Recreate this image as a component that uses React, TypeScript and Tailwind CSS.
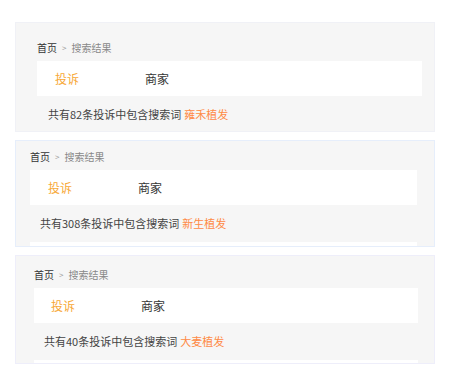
import React from "react";

type CardProps = {
  count: string;
  keyword: string;
  cardClass: string;
  padClass: string;
  countPad: string;
  tabPad: string;
};

function Card({ count, keyword, cardClass, padClass, countPad, tabPad }: CardProps) {
  return (
    <div className={`w-[420px] overflow-hidden border bg-[#f6f6f6] ${cardClass}`}>
      <div className={padClass}>
        <div className="flex h-[14px] items-center text-[10px] leading-[14px]">
          <span className="text-[#333]">首页</span>
          <span className="mx-[5px] text-[8px] text-[#999]">&gt;</span>
          <span className="text-[#888]">搜索结果</span>
        </div>
        <div className={`mt-[6px] flex h-[35px] items-center bg-white text-[12px] ${tabPad}`}>
          <span className="w-[90px] text-[#f7a836]">投诉</span>
          <span className="text-[#333]">商家</span>
        </div>
        <div className={`flex h-[37px] items-center text-[11px] text-[#444] ${countPad}`}>
          <span>共有{count}条投诉中包含搜索词</span>
          <span className="ml-[3px] text-[#ff8a45]">{keyword}</span>
        </div>
        <div className="h-[35px] bg-white" />
      </div>
    </div>
  );
}

export default function App() {
  return (
    <div
      className="h-[387px] w-[450px] bg-white px-[15px] pt-[22px]"
      style={{ fontFamily: '"Noto Sans CJK SC", "Noto Sans", sans-serif' }}
    >
      <div className="flex flex-col gap-[8px]">
        <Card
          count="82"
          keyword="雍禾植发"
          cardClass="h-[110px] border-[#f0f1f6]"
          padClass="pt-[18px] pl-[21px] pr-[12px]"
          countPad="pl-[11px]"
          tabPad="pl-[18px]"
        />
        <Card
          count="308"
          keyword="新生植发"
          cardClass="h-[107px] border-[#e6eefb]"
          padClass="pt-[9px] pl-[14px] pr-[17px]"
          countPad="pl-[10px]"
          tabPad="pl-[18px]"
        />
        <Card
          count="40"
          keyword="大麦植发"
          cardClass="h-[109px] border-[#eeeefa]"
          padClass="pt-[12px] pl-[18px] pr-[16px]"
          countPad="pl-[10px]"
          tabPad="pl-[17px]"
        />
      </div>
    </div>
  );
}
